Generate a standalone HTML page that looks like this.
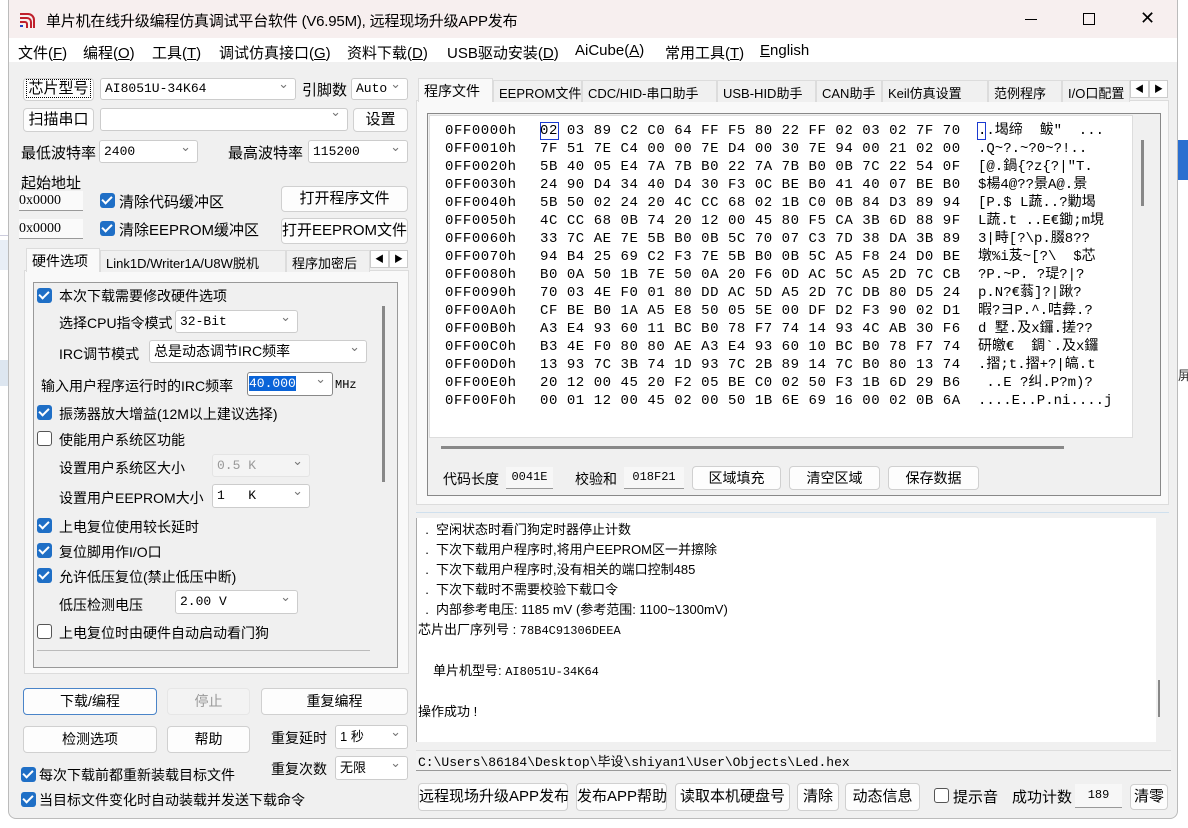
<!DOCTYPE html>
<html><head><meta charset="utf-8">
<style>
*{box-sizing:border-box;margin:0;padding:0}
body{width:1188px;height:828px;position:relative;overflow:hidden;background:#fff;font-family:"Liberation Sans","Noto Sans CJK SC",sans-serif;font-size:14px;color:#000}
.a{position:absolute;white-space:nowrap}
.win{position:absolute;left:8px;top:0;width:1170px;height:819px;background:#f0f0f0;border:1px solid #bbb;border-top:none;border-radius:0 0 8px 8px}
.btn{position:absolute;background:#fdfdfd;border:1px solid #d0d0d0;border-radius:4px;text-align:center;font-size:14px;white-space:nowrap}
.cb{position:absolute;background:#fff;border:1px solid #ccc;border-radius:3px;font-family:"Liberation Mono","Noto Sans CJK SC",monospace;font-size:13px;padding-left:4px;white-space:nowrap}
.cb:after{content:"⌄";position:absolute;right:6px;top:-4px;color:#777;font-family:"DejaVu Sans";font-size:13px}
.chk{position:absolute;width:15px;height:15px;border-radius:3px;background:#1f6fc6}
.chk:after{content:"";position:absolute;left:4px;top:1px;width:4px;height:8px;border:solid #fff;border-width:0 2px 2px 0;transform:rotate(45deg)}
.unc{position:absolute;width:15px;height:15px;border-radius:3px;border:1px solid #555;background:#fff}
.fld{position:absolute;background:#f7f7f7;border-bottom:1px solid #999;font-family:"Liberation Mono",monospace;font-size:12px;text-align:center}
.mono{font-family:"Liberation Mono","Noto Sans CJK SC",monospace}
.tab{position:absolute;height:22px;border:1px solid #dcdcdc;border-bottom:none;background:#f0f0f0;font-size:13px;padding:2px 5px 0;white-space:nowrap}
.hex{position:absolute;font-family:"Liberation Mono","Noto Sans CJK SC",monospace;font-size:14px;letter-spacing:0.55px;white-space:pre;line-height:18px}
</style></head><body>
<div class="a" style="left:0;top:240px;width:8px;height:30px;background:#e8eef6"></div>
<div class="a" style="left:0;top:360px;width:8px;height:26px;background:#dde6f0"></div>
<div class="a" style="left:0;top:235px;width:8px;height:170px;border-top:1px solid #ccd;"></div>
<div class="a" style="left:1178px;top:140px;width:10px;height:40px;background:#2a6fd0"></div>
<div class="a" style="left:1178px;top:365px;width:10px;height:26px;color:#333;font-size:13px">屏</div>
<div class="win"></div>
<!-- title -->
<div class="a" style="left:9px;top:0;width:1168px;height:38px;background:#f7efef"></div>
<svg class="a" style="left:18px;top:10px" width="20" height="20" viewBox="0 0 20 20"><path d="M2 4h8a6 6 0 0 1 6 6v8M2 8h7a4 4 0 0 1 4 4v6M2 12h5a2 2 0 0 1 2 2v4" stroke="#c0202c" stroke-width="2" fill="none"/><path d="M2 16h3" stroke="#2040c0" stroke-width="2"/></svg>
<div class="a" style="left:46px;top:10px;font-size:15px;letter-spacing:-0.2px">单片机在线升级编程仿真调试平台软件 (V6.95M), 远程现场升级APP发布</div>
<div class="a" style="left:1025px;top:19px;width:12px;height:1px;background:#000"></div>
<div class="a" style="left:1083px;top:13px;width:12px;height:12px;border:1px solid #000"></div>
<div class="a" style="left:1140px;top:8px;font-size:18px;font-family:'DejaVu Sans'">✕</div>
<!-- menu -->
<div class="a" style="left:9px;top:38px;width:1168px;height:24px;background:#fff"></div>
<div class="a" style="left:18px;top:42px;font-size:15px">文件(<u>F</u>)</div>
<div class="a" style="left:83px;top:42px;font-size:15px">编程(<u>O</u>)</div>
<div class="a" style="left:152px;top:42px;font-size:15px">工具(<u>T</u>)</div>
<div class="a" style="left:219px;top:42px;font-size:15px">调试仿真接口(<u>G</u>)</div>
<div class="a" style="left:347px;top:42px;font-size:15px">资料下载(<u>D</u>)</div>
<div class="a" style="left:447px;top:42px;font-size:15px">USB驱动安装(<u>D</u>)</div>
<div class="a" style="left:575px;top:42px;font-size:15px">AiCube(<u>A</u>)</div>
<div class="a" style="left:665px;top:42px;font-size:15px">常用工具(<u>T</u>)</div>
<div class="a" style="left:760px;top:42px;font-size:15px"><u>E</u>nglish</div>

<!-- left top -->
<div class="btn" style="left:23px;top:78px;width:71px;height:23px;line-height:20px;font-size:15px"><span style="border:1px dotted #000;padding:0 1px">芯片型号</span></div>
<div class="cb" style="left:100px;top:78px;width:196px;height:22px;line-height:20px">AI8051U-34K64</div>
<div class="a" style="left:302px;top:79px;font-size:15px">引脚数</div>
<div class="cb" style="left:351px;top:78px;width:57px;height:22px;line-height:20px">Auto</div>
<div class="btn" style="left:23px;top:108px;width:71px;height:24px;line-height:22px;font-size:15px">扫描串口</div>
<div class="cb" style="left:100px;top:108px;width:248px;height:23px"></div>
<div class="btn" style="left:353px;top:108px;width:55px;height:24px;line-height:22px;font-size:15px">设置</div>
<div class="a" style="left:21px;top:142px;font-size:15px">最低波特率</div>
<div class="cb" style="left:99px;top:140px;width:99px;height:23px;line-height:21px">2400</div>
<div class="a" style="left:228px;top:142px;font-size:15px">最高波特率</div>
<div class="cb" style="left:308px;top:140px;width:100px;height:23px;line-height:21px">115200</div>
<div class="a" style="left:21px;top:172px;font-size:15px">起始地址</div>
<div class="fld" style="left:19px;top:191px;width:64px;height:20px;line-height:19px;text-align:left;background:#fafafa;font-family:'Liberation Serif';font-size:14px">0x0000</div>
<div class="chk" style="left:100px;top:193px"></div>
<div class="a" style="left:119px;top:191px;font-size:15px">清除代码缓冲区</div>
<div class="btn" style="left:281px;top:186px;width:127px;height:26px;line-height:24px;font-size:15px">打开程序文件</div>
<div class="fld" style="left:19px;top:219px;width:64px;height:20px;line-height:19px;text-align:left;background:#fafafa;font-family:'Liberation Serif';font-size:14px">0x0000</div>
<div class="chk" style="left:100px;top:221px"></div>
<div class="a" style="left:119px;top:219px;font-size:15px">清除EEPROM缓冲区</div>
<div class="btn" style="left:281px;top:218px;width:127px;height:26px;line-height:24px;font-size:15px">打开EEPROM文件</div>

<!-- left tabs -->
<div class="a" style="left:24px;top:270px;width:385px;height:404px;background:#f9f9f9;border:1px solid #dcdcdc"></div>
<div class="tab" style="left:26px;top:248px;width:74px;height:24px;background:#f9f9f9;font-size:14px">硬件选项</div>
<div class="tab" style="left:100px;top:250px;width:186px">Link1D/Writer1A/U8W脱机</div>
<div class="tab" style="left:286px;top:250px;width:84px;overflow:hidden">程序加密后</div>
<div class="a" style="left:370px;top:250px;width:19px;height:18px;border:1px solid #ccc;background:#fff;font-size:9px;text-align:center;line-height:16px">◀</div>
<div class="a" style="left:389px;top:250px;width:19px;height:18px;border:1px solid #ccc;background:#fff;font-size:9px;text-align:center;line-height:16px">▶</div>
<div class="a" style="left:33px;top:282px;width:365px;height:386px;border:1px solid #999;background:#f0f0f0"></div>
<div class="a" style="left:382px;top:306px;width:3px;height:176px;background:#888"></div>
<div class="a" style="left:37px;top:650px;width:333px;height:1px;background:#bbb"></div>

<div class="chk" style="left:37px;top:288px"></div><div class="a" style="left:59px;top:286px;font-size:14px">本次下载需要修改硬件选项</div>
<div class="a" style="left:59px;top:313px">选择CPU指令模式</div><div class="cb" style="left:175px;top:310px;width:123px;height:23px;line-height:21px">32-Bit</div>
<div class="a" style="left:59px;top:344px">IRC调节模式</div><div class="cb" style="left:149px;top:340px;width:218px;height:23px;line-height:21px;font-family:'Liberation Sans','Noto Sans CJK SC';font-size:14px">总是动态调节IRC频率</div>
<div class="a" style="left:41px;top:376px">输入用户程序运行时的IRC频率</div>
<div class="cb" style="left:247px;top:372px;width:86px;height:24px;line-height:21px;border-color:#888"><span style="background:#0a64d8;color:#fff;margin-left:-3px">40.000</span></div>
<div class="a mono" style="left:335px;top:378px;font-size:12px">MHz</div>
<div class="chk" style="left:37px;top:405px"></div><div class="a" style="left:59px;top:404px">振荡器放大增益(12M以上建议选择)</div>
<div class="unc" style="left:37px;top:431px"></div><div class="a" style="left:59px;top:430px">使能用户系统区功能</div>
<div class="a" style="left:59px;top:458px">设置用户系统区大小</div><div class="cb" style="left:212px;top:454px;width:98px;height:23px;line-height:21px;color:#999;border-color:#e4e4e4;background:#f4f4f4">0.5 K</div>
<div class="a" style="left:59px;top:488px">设置用户EEPROM大小</div><div class="cb" style="left:212px;top:484px;width:98px;height:24px;line-height:22px">1&nbsp;&nbsp;&nbsp;K</div>
<div class="chk" style="left:37px;top:518px"></div><div class="a" style="left:59px;top:517px">上电复位使用较长延时</div>
<div class="chk" style="left:37px;top:543px"></div><div class="a" style="left:59px;top:542px">复位脚用作I/O口</div>
<div class="chk" style="left:37px;top:568px"></div><div class="a" style="left:59px;top:567px">允许低压复位(禁止低压中断)</div>
<div class="a" style="left:59px;top:595px">低压检测电压</div><div class="cb" style="left:175px;top:590px;width:123px;height:24px;line-height:22px">2.00 V</div>
<div class="unc" style="left:37px;top:624px"></div><div class="a" style="left:59px;top:623px">上电复位时由硬件自动启动看门狗</div>

<!-- left bottom -->
<div class="btn" style="left:23px;top:688px;width:134px;height:27px;line-height:25px;border-color:#4a84c8">下载/编程</div>
<div class="btn" style="left:167px;top:688px;width:83px;height:27px;line-height:25px;color:#999;background:#f3f3f3;border-color:#e6e6e6">停止</div>
<div class="btn" style="left:261px;top:688px;width:147px;height:27px;line-height:25px">重复编程</div>
<div class="btn" style="left:23px;top:726px;width:134px;height:27px;line-height:25px">检测选项</div>
<div class="btn" style="left:167px;top:726px;width:83px;height:27px;line-height:25px">帮助</div>
<div class="a" style="left:271px;top:728px">重复延时</div><div class="cb" style="left:335px;top:725px;width:73px;height:24px;line-height:22px;font-family:'Liberation Sans','Noto Sans CJK SC'">1 秒</div>
<div class="a" style="left:271px;top:759px">重复次数</div><div class="cb" style="left:335px;top:756px;width:73px;height:24px;line-height:22px;font-family:'Liberation Sans','Noto Sans CJK SC'">无限</div>
<div class="chk" style="left:21px;top:767px"></div><div class="a" style="left:39px;top:765px">每次下载前都重新装载目标文件</div>
<div class="chk" style="left:21px;top:792px"></div><div class="a" style="left:39px;top:790px">当目标文件变化时自动装载并发送下载命令</div>

<!-- right tabs -->
<div class="a" style="left:416px;top:100px;width:753px;height:405px;background:#f9f9f9;border:1px solid #dcdcdc"></div>
<div class="tab" style="left:418px;top:78px;width:75px;height:24px;background:#f9f9f9;font-size:14px">程序文件</div>
<div class="tab" style="left:493px;top:80px;width:89px">EEPROM文件</div>
<div class="tab" style="left:582px;top:80px;width:135px">CDC/HID-串口助手</div>
<div class="tab" style="left:717px;top:80px;width:99px">USB-HID助手</div>
<div class="tab" style="left:816px;top:80px;width:66px">CAN助手</div>
<div class="tab" style="left:882px;top:80px;width:106px">Keil仿真设置</div>
<div class="tab" style="left:988px;top:80px;width:74px">范例程序</div>
<div class="tab" style="left:1062px;top:80px;width:68px;overflow:hidden">I/O口配置</div>
<div class="a" style="left:1130px;top:80px;width:19px;height:18px;border:1px solid #ccc;background:#fff;font-size:9px;text-align:center;line-height:16px">◀</div>
<div class="a" style="left:1149px;top:80px;width:19px;height:18px;border:1px solid #ccc;background:#fff;font-size:9px;text-align:center;line-height:16px">▶</div>
<div class="a" style="left:427px;top:113px;width:734px;height:383px;border:1px solid #888;background:#f0f0f0"></div>
<div class="a" style="left:429px;top:115px;width:704px;height:323px;background:#fff;border:1px solid #ddd"></div>
<div class="a" style="left:1141px;top:140px;width:3px;height:66px;background:#888"></div>
<div class="a" style="left:441px;top:446px;width:623px;height:3px;background:#888"></div>
<div class="a" style="left:540px;top:122px;width:19px;height:18px;border:1px solid #1a3ad0"></div>
<div class="a" style="left:977px;top:122px;width:9px;height:18px;border:1px solid #1a3ad0"></div>
<div class="hex" style="left:445px;top:122px">0FF0000h
0FF0010h
0FF0020h
0FF0030h
0FF0040h
0FF0050h
0FF0060h
0FF0070h
0FF0080h
0FF0090h
0FF00A0h
0FF00B0h
0FF00C0h
0FF00D0h
0FF00E0h
0FF00F0h</div>
<div class="hex" style="left:540px;top:122px">02 03 89 C2 C0 64 FF F5 80 22 FF 02 03 02 7F 70
7F 51 7E C4 00 00 7E D4 00 30 7E 94 00 21 02 00
5B 40 05 E4 7A 7B B0 22 7A 7B B0 0B 7C 22 54 0F
24 90 D4 34 40 D4 30 F3 0C BE B0 41 40 07 BE B0
5B 50 02 24 20 4C CC 68 02 1B C0 0B 84 D3 89 94
4C CC 68 0B 74 20 12 00 45 80 F5 CA 3B 6D 88 9F
33 7C AE 7E 5B B0 0B 5C 70 07 C3 7D 38 DA 3B 89
94 B4 25 69 C2 F3 7E 5B B0 0B 5C A5 F8 24 D0 BE
B0 0A 50 1B 7E 50 0A 20 F6 0D AC 5C A5 2D 7C CB
70 03 4E F0 01 80 DD AC 5D A5 2D 7C DB 80 D5 24
CF BE B0 1A A5 E8 50 05 5E 00 DF D2 F3 90 02 D1
A3 E4 93 60 11 BC B0 78 F7 74 14 93 4C AB 30 F6
B3 4E F0 80 80 AE A3 E4 93 60 10 BC B0 78 F7 74
13 93 7C 3B 74 1D 93 7C 2B 89 14 7C B0 80 13 74
20 12 00 45 20 F2 05 BE C0 02 50 F3 1B 6D 29 B6
00 01 12 00 45 02 00 50 1B 6E 69 16 00 02 0B 6A</div>
<div class="hex" style="left:978px;top:122px;letter-spacing:0">..堨缔  鲅"  ...
.Q~?.~?0~?!..
[@.鍋{?z{?|"T.
$楊4@??景A@.景
[P.$ L蔬..?勦堨
L蔬.t ..E€鋤;m垷
3|畤[?\p.腏8??
墩%i芨~[?\  $芯
?P.~P. ?瑅?|?
p.N?€蓊]?|踿?
暇?ヨP.^.咭彜.?
d 墅.及x鑼.搓??
研皦€  錭`.及x鑼
.摺;t.摺+?|皜.t
 ..E ?纠.P?m)?
....E..P.ni....j</div>
<div class="a" style="left:443px;top:469px">代码长度</div><div class="fld" style="left:506px;top:467px;width:47px;height:22px;line-height:21px">0041E</div>
<div class="a" style="left:575px;top:469px">校验和</div><div class="fld" style="left:624px;top:467px;width:60px;height:22px;line-height:21px">018F21</div>
<div class="btn" style="left:692px;top:466px;width:89px;height:24px;line-height:22px">区域填充</div>
<div class="btn" style="left:789px;top:466px;width:91px;height:24px;line-height:22px">清空区域</div>
<div class="btn" style="left:888px;top:466px;width:91px;height:24px;line-height:22px">保存数据</div>

<!-- log -->
<div class="a" style="left:416px;top:512px;width:753px;height:1px;background:#cfe0ee"></div>
<div class="a" style="left:416px;top:518px;width:753px;height:224px;background:#fff;border-left:1px solid #aaa"></div>
<div class="a" style="left:1156px;top:518px;width:13px;height:224px;background:#f0f0f0"></div>
<div class="a" style="left:1158px;top:680px;width:2px;height:37px;background:#888"></div>
<div class="a" style="left:418px;top:520px;font-size:13px;line-height:20px;white-space:pre">  .  空闲状态时看门狗定时器停止计数
  .  下次下载用户程序时,将用户EEPROM区一并擦除
  .  下次下载用户程序时,没有相关的端口控制485
  .  下次下载时不需要校验下载口令
  .  内部参考电压: 1185 mV (参考范围: 1100~1300mV)
芯片出厂序列号 : <span class="mono" style="font-size:12px">78B4C91306DEEA</span></div>
<div class="a" style="left:433px;top:660px;font-size:13px">单片机型号: <span class="mono" style="font-size:12px">AI8051U-34K64</span></div>
<div class="a" style="left:418px;top:701px;font-size:13px">操作成功 !</div>
<div class="a mono" style="left:416px;top:750px;width:755px;height:21px;background:#f2f2f2;border-bottom:1px solid #999;border-top:1px solid #ddd;font-size:13px;line-height:20px;padding-left:2px">C:\Users\86184\Desktop\<span style="font-family:'Noto Sans CJK SC'">毕设</span>\shiyan1\User\Objects\Led.hex</div>
<div class="btn" style="left:418px;top:783px;width:150px;height:28px;line-height:26px;font-size:15px">远程现场升级APP发布</div>
<div class="btn" style="left:576px;top:783px;width:91px;height:28px;line-height:26px;font-size:15px">发布APP帮助</div>
<div class="btn" style="left:675px;top:783px;width:115px;height:28px;line-height:26px;font-size:15px">读取本机硬盘号</div>
<div class="btn" style="left:797px;top:783px;width:42px;height:28px;line-height:26px;font-size:15px">清除</div>
<div class="btn" style="left:845px;top:783px;width:75px;height:28px;line-height:26px;font-size:15px">动态信息</div>
<div class="unc" style="left:934px;top:788px"></div><div class="a" style="left:953px;top:786px;font-size:15px">提示音</div>
<div class="a" style="left:1012px;top:786px;font-size:15px">成功计数</div>
<div class="fld" style="left:1075px;top:784px;width:47px;height:24px;line-height:22px">189</div>
<div class="btn" style="left:1130px;top:784px;width:38px;height:26px;line-height:24px;font-size:15px">清零</div>
</body></html>
